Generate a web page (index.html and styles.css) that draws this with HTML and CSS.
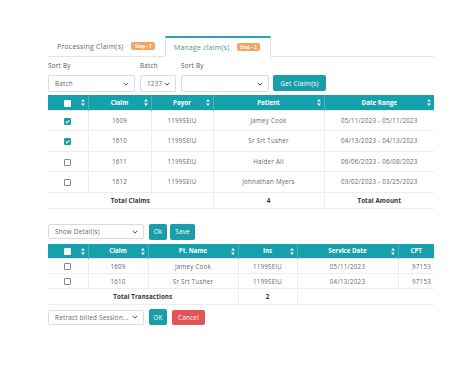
FILE: index.html
```html
<!DOCTYPE html>
<html>
<head>
<meta charset="utf-8">
<link rel="stylesheet" href="styles.css">
</head>
<body>
<div class="page">
  <div class="tabs">
    <div class="tab">Processing Claim(s) <span class="badge">Step - 1</span></div>
    <div class="tab active">Manage claim(s) <span class="badge">Step - 2</span></div>
  </div>

  <div class="filters">
    <div class="field f1">
      <label>Sort By</label>
      <div class="select"><span>Batch</span><svg class="chev" viewBox="0 0 8 5"><path d="M1 1l3 3 3-3" fill="none" stroke="#444" stroke-width="1.3"/></svg></div>
    </div>
    <div class="field f2">
      <label>Batch</label>
      <div class="select"><span>1237</span><svg class="chev" viewBox="0 0 8 5"><path d="M1 1l3 3 3-3" fill="none" stroke="#444" stroke-width="1.3"/></svg></div>
    </div>
    <div class="field f3">
      <label>Sort By</label>
      <div class="select"><span></span><svg class="chev" viewBox="0 0 8 5"><path d="M1 1l3 3 3-3" fill="none" stroke="#444" stroke-width="1.3"/></svg></div>
    </div>
    <button class="btn teal get">Get Claim(s)</button>
  </div>

  <table class="grid t1">
    <colgroup><col style="width:40px"><col style="width:63px"><col style="width:62px"><col style="width:111px"><col style="width:110px"></colgroup>
    <thead>
      <tr>
        <th><span class="cb white"></span><svg class="sort" viewBox="0 0 4 7"><path d="M2 0l2 2.6H0zM2 7L0 4.4h4z" fill="#fff"/></svg></th>
        <th>Claim<svg class="sort" viewBox="0 0 4 7"><path d="M2 0l2 2.6H0zM2 7L0 4.4h4z" fill="#fff"/></svg></th>
        <th>Payor<svg class="sort" viewBox="0 0 4 7"><path d="M2 0l2 2.6H0zM2 7L0 4.4h4z" fill="#fff"/></svg></th>
        <th>Patient<svg class="sort" viewBox="0 0 4 7"><path d="M2 0l2 2.6H0zM2 7L0 4.4h4z" fill="#fff"/></svg></th>
        <th>Date Range<svg class="sort" viewBox="0 0 4 7"><path d="M2 0l2 2.6H0zM2 7L0 4.4h4z" fill="#fff"/></svg></th>
      </tr>
    </thead>
    <tbody>
      <tr><td><span class="cb on"><svg viewBox="0 0 8 8"><path d="M2 4.2l1.4 1.4L6.2 2.6" fill="none" stroke="#fff" stroke-width="1.2"/></svg></span></td><td>1609</td><td>1199SEIU</td><td>Jamey Cook</td><td>05/11/2023 - 05/11/2023</td></tr>
      <tr><td><span class="cb on"><svg viewBox="0 0 8 8"><path d="M2 4.2l1.4 1.4L6.2 2.6" fill="none" stroke="#fff" stroke-width="1.2"/></svg></span></td><td>1610</td><td>1199SEIU</td><td>Sr Srt Tusher</td><td>04/13/2023 - 04/13/2023</td></tr>
      <tr><td><span class="cb"></span></td><td>1611</td><td>1199SEIU</td><td>Haider Ali</td><td>06/06/2023 - 06/08/2023</td></tr>
      <tr><td><span class="cb"></span></td><td>1612</td><td>1199SEIU</td><td>Johnathan Myers</td><td>03/02/2023 - 03/25/2023</td></tr>
      <tr class="total"><td colspan="3">Total Claims</td><td>4</td><td>Total Amount</td></tr>
    </tbody>
  </table>

  <div class="actions a1">
    <div class="select wide"><span>Show Detail(s)</span><svg class="chev" viewBox="0 0 8 5"><path d="M1 1l3 3 3-3" fill="none" stroke="#444" stroke-width="1.3"/></svg></div>
    <button class="btn teal small">Ok</button>
    <button class="btn teal save">Save</button>
  </div>

  <table class="grid t2">
    <colgroup><col style="width:40px"><col style="width:60px"><col style="width:90px"><col style="width:59px"><col style="width:101px"><col style="width:36px"></colgroup>
    <thead>
      <tr>
        <th><span class="cb white"></span><svg class="sort" viewBox="0 0 4 7"><path d="M2 0l2 2.6H0zM2 7L0 4.4h4z" fill="#fff"/></svg></th>
        <th>Claim<svg class="sort" viewBox="0 0 4 7"><path d="M2 0l2 2.6H0zM2 7L0 4.4h4z" fill="#fff"/></svg></th>
        <th>Pt. Name<svg class="sort" viewBox="0 0 4 7"><path d="M2 0l2 2.6H0zM2 7L0 4.4h4z" fill="#fff"/></svg></th>
        <th>Ins<svg class="sort" viewBox="0 0 4 7"><path d="M2 0l2 2.6H0zM2 7L0 4.4h4z" fill="#fff"/></svg></th>
        <th>Service Date<svg class="sort" viewBox="0 0 4 7"><path d="M2 0l2 2.6H0zM2 7L0 4.4h4z" fill="#fff"/></svg></th>
        <th>CPT</th>
      </tr>
    </thead>
    <tbody>
      <tr><td><span class="cb"></span></td><td>1609</td><td>Jamey Cook</td><td>1199SEIU</td><td>05/11/2023</td><td class="r">97153</td></tr>
      <tr><td><span class="cb"></span></td><td>1610</td><td>Sr Srt Tusher</td><td>1199SEIU</td><td>04/13/2023</td><td class="r">97153</td></tr>
      <tr class="total"><td colspan="3">Total Transactions</td><td>2</td><td colspan="2"></td></tr>
    </tbody>
  </table>

  <div class="actions a2">
    <div class="select wide"><span>Retract billed Session...</span><svg class="chev" viewBox="0 0 8 5"><path d="M1 1l3 3 3-3" fill="none" stroke="#444" stroke-width="1.3"/></svg></div>
    <button class="btn teal small">OK</button>
    <button class="btn red">Cancel</button>
  </div>
</div>
</body>
</html>
```

FILE: styles.css
```css
* { box-sizing: border-box; }
body {
  margin: 0;
  background: #fff;
  font-family: "Open Sans", "DejaVu Sans", sans-serif;
  color: #666;
  letter-spacing: 0.25px;
}
.page {
  width: 386px;
  margin-left: 48px;
  padding-top: 36px;
}
.tabs {
  display: flex;
  border-bottom: 1px solid #e4e6ee;
  height: 21px;
}
.tab {
  display: flex;
  align-items: center;
  gap: 8px;
  font-size: 6.9px;
  color: #666;
  padding-left: 9px;
  width: 117px;
  height: 20px;
}
.tab.active {
  width: 106px;
  height: 21px;
  border: 1px solid #dde0e6;
  border-top: 2px solid #2aa6b0;
  border-bottom: 1px solid #fff;
  color: #4f8e9a;
  background: #fff;
  padding-left: 8px;
  gap: 7px;
}
.badge {
  display: inline-block;
  background: #f2a366;
  color: #fff;
  font-size: 4.6px;
  font-weight: 700;
  line-height: 8px;
  padding: 0 3.5px;
  border-radius: 2px;
  letter-spacing: 0;
}
.filters {
  display: flex;
  align-items: flex-end;
  gap: 5px;
  margin-top: 4px;
}
.field { display: flex; flex-direction: column; gap: 4px; }
.field label { font-size: 6.3px; color: #555; line-height: 10px; }
.f1 { width: 87px; }
.f2 { width: 36px; }
.f3 { width: 88px; }
.select {
  display: flex;
  align-items: center;
  justify-content: space-between;
  height: 17px;
  border: 1px solid #d8dbe0;
  border-radius: 2px;
  padding: 0 5px 0 6px;
  font-size: 6.3px;
  color: #666;
  background: #fff;
}
.chev { width: 6px; height: 4px; }
.btn {
  border: none;
  border-radius: 2px;
  color: #fff;
  font-family: inherit;
  font-size: 6.4px;
  letter-spacing: 0.2px;
  padding: 0;
  height: 16px;
  cursor: pointer;
}
.teal { background: #199ea9; }
.red { background: #e05555; width: 33px; margin-left: 2px; height: 15px; }
.get { width: 53px; margin-left: -1px; margin-bottom: 1px; }
.small { width: 18px; }
.save { width: 25px; }
.grid {
  border-collapse: collapse;
  table-layout: fixed;
  width: 386px;
  margin-top: 3px;
  font-size: 6.2px;
}
.grid th {
  background: #16a0ab;
  color: #fff;
  font-weight: 700;
  height: 15px;
  padding: 0;
  position: relative;
  border-right: 1px solid #45b5be;
  letter-spacing: 0;
}
.grid th:last-child { border-right: none; }
.sort {
  position: absolute;
  right: 3px;
  top: 4px;
  width: 4px;
  height: 7px;
}
.grid td {
  text-align: center;
  padding: 0;
  border: 1px solid #ebedf0;
  color: #666;
}
.grid td:first-child { border-left: none; }
.grid td:last-child { border-right: none; }
.t1 tbody tr { height: 20.5px; }
.t1 tbody tr.total { height: 16px; }
.total td { font-weight: 700; color: #333; letter-spacing: 0.1px; }
.cb {
  display: inline-block;
  width: 7px;
  height: 7px;
  border: 1px solid #888;
  border-radius: 1px;
  background: #fff;
  vertical-align: middle;
}
.cb.white { border: none; width: 7px; height: 7px; }
.cb.on { background: #1a9aa6; border-color: #1a9aa6; }
.cb.on svg { width: 7px; height: 7px; display: block; margin: -1px; }
.actions {
  display: flex;
  align-items: center;
  gap: 3px;
}
.a1 { margin-top: 15px; }
.a1 .small { margin-left: 2px; }
.a2 { margin-top: 4px; }
.a2 .small { margin-left: 2px; }
.wide { width: 96px; height: 15px; }
.t2 { margin-top: 4px; }
.t2 tbody tr { height: 15px; }
.t2 tbody tr.total { height: 16px; }
.r { text-align: right !important; padding-right: 3px !important; }
```
